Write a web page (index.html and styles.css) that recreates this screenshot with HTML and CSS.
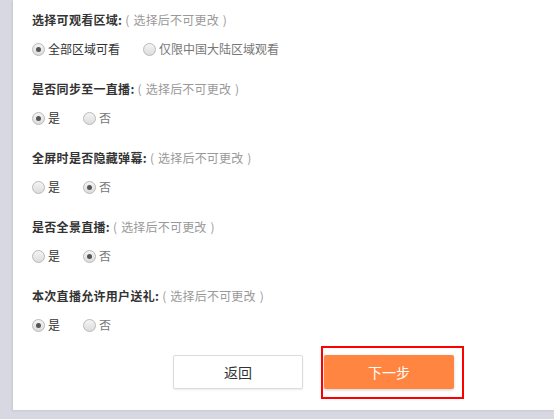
FILE: index.html
```html
<!DOCTYPE html>
<html lang="zh-CN">
<head>
  <meta charset="UTF-8" />
  <title>直播设置</title>
  <link rel="stylesheet" href="styles.css">
</head>
<body>

  <div class="card">

    <div class="group">
      <div class="label">选择可观看区域:<span class="hint">( 选择后不可更改 )</span></div>
      <div class="options">
        <span class="option checked"><i class="radio"></i>全部区域可看</span>
        <span class="option muted"><i class="radio"></i>仅限中国大陆区域观看</span>
      </div>
    </div>

    <div class="group">
      <div class="label">是否同步至一直播:<span class="hint">( 选择后不可更改 )</span></div>
      <div class="options">
        <span class="option checked"><i class="radio"></i>是</span>
        <span class="option muted"><i class="radio"></i>否</span>
      </div>
    </div>

    <div class="group">
      <div class="label">全屏时是否隐藏弹幕:<span class="hint">( 选择后不可更改 )</span></div>
      <div class="options">
        <span class="option"><i class="radio"></i>是</span>
        <span class="option muted checked"><i class="radio"></i>否</span>
      </div>
    </div>

    <div class="group">
      <div class="label">是否全景直播:<span class="hint">( 选择后不可更改 )</span></div>
      <div class="options">
        <span class="option"><i class="radio"></i>是</span>
        <span class="option muted checked"><i class="radio"></i>否</span>
      </div>
    </div>

    <div class="group">
      <div class="label">本次直播允许用户送礼:<span class="hint">( 选择后不可更改 )</span></div>
      <div class="options">
        <span class="option checked"><i class="radio"></i>是</span>
        <span class="option muted"><i class="radio"></i>否</span>
      </div>
    </div>

    <div class="actions">
      <button class="btn btn-back">返回</button>
      <div class="highlight">
        <button class="btn btn-next">下一步</button>
      </div>
    </div>

  </div>

</body>
</html>
```

FILE: styles.css
```css
* {
  box-sizing: border-box;
  margin: 0;
  padding: 0;
}

body {
  font-family: "Noto Sans CJK SC", "Noto Sans", sans-serif;
  font-size: 12px;
  background: #d8d8e2;
  color: #333;
  overflow: hidden;
}

/* --- CARD --- */
.card {
  margin: 0 0 6px 13px;
  background: #fff;
  padding: 10px 0 21px 19px;
  box-shadow: -1px 1px 2px rgba(0, 0, 0, 0.08);
}

.group {
  margin-bottom: 20px;
}

.group:last-of-type {
  margin-bottom: 23px;
}

.label {
  height: 20px;
  line-height: 20px;
  font-weight: bold;
  color: #333;
  letter-spacing: 0.3px;
}

.hint {
  font-weight: normal;
  color: #999;
  margin-left: 3px;
  word-spacing: 1px;
  letter-spacing: 0.2px;
}

.options {
  display: flex;
  gap: 23px;
  height: 20px;
  margin-top: 9px;
  align-items: center;
}

.option {
  display: flex;
  align-items: center;
  line-height: 20px;
  color: #333;
}

.option.muted {
  color: #777;
}

.radio {
  width: 13px;
  height: 13px;
  border-radius: 50%;
  border: 1px solid #b9b9b9;
  background: linear-gradient(to bottom, #f4f4f4, #dcdcdc);
  margin-right: 3px;
  display: flex;
  justify-content: center;
  align-items: center;
}

.option.checked .radio::after {
  content: "";
  width: 5px;
  height: 5px;
  border-radius: 50%;
  background: #555;
}

/* --- BOTTONI --- */
.actions {
  display: flex;
  gap: 21px;
  padding-left: 141px;
}

.btn {
  width: 130px;
  height: 34px;
  font-family: inherit;
  font-size: 14px;
  border-radius: 2px;
  cursor: pointer;
}

.btn-back {
  background: #fff;
  color: #333;
  border: 1px solid #dcdcdc;
  box-shadow: 0 1px 2px rgba(0, 0, 0, 0.08);
}

.btn-next {
  background: #ff8541;
  color: #fff;
  border: none;
  box-shadow: 0 1px 3px rgba(0, 0, 0, 0.2);
}

/* riquadro rosso di evidenziazione */
.highlight {
  position: relative;
}

.highlight::after {
  content: "";
  position: absolute;
  top: -9px;
  left: -3px;
  right: -10px;
  bottom: -10px;
  border: 2px solid #f00;
  pointer-events: none;
}
```
